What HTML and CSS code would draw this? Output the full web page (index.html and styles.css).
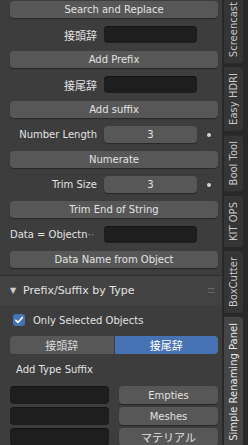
FILE: index.html
```html
<!DOCTYPE html>
<html lang="en">
<head>
  <meta charset="UTF-8" />
  <title>Simple Renaming Panel</title>
  <link rel="stylesheet" href="styles.css">
</head>
<body>
  <div class="region">
    <div class="main">
      <div class="panel-body">
        <button class="btn">Search and Replace</button>
        <div class="prop-row">
          <span class="label cjk">接頭辞</span>
          <span class="field text"></span>
        </div>
        <button class="btn">Add Prefix</button>
        <div class="prop-row">
          <span class="label cjk">接尾辞</span>
          <span class="field text"></span>
        </div>
        <button class="btn">Add suffix</button>
        <div class="prop-row">
          <span class="label">Number Length</span>
          <span class="field num">3</span>
          <span class="dot"></span>
        </div>
        <button class="btn">Numerate</button>
        <div class="prop-row">
          <span class="label">Trim Size</span>
          <span class="field num">3</span>
          <span class="dot"></span>
        </div>
        <button class="btn">Trim End of String</button>
        <div class="prop-row">
          <span class="label left">Data = Objectn<span class="dim">··</span></span>
          <span class="field text"></span>
        </div>
        <button class="btn">Data Name from Object</button>
      </div>

      <div class="subpanel">
        <div class="sub-header">
          <span class="arrow">▼</span>
          <span class="sub-title">Prefix/Suffix by Type</span>
          <span class="grip">::::</span>
        </div>
        <div class="sub-body">
          <label class="check-row">
            <span class="checkbox">
              <svg width="10" height="10" viewBox="0 0 10 10"><path d="M1.8 5.2 L4 7.4 L8.3 2.4" fill="none" stroke="#fff" stroke-width="1.6" stroke-linecap="round" stroke-linejoin="round"/></svg>
            </span>
            Only Selected Objects
          </label>
          <div class="toggle">
            <span class="toggle-item cjk">接頭辞</span>
            <span class="toggle-item active cjk">接尾辞</span>
          </div>
          <div class="caption">Add Type Suffix</div>
          <div class="type-rows">
            <div class="type-row">
              <span class="field text wide"></span>
              <button class="btn small">Empties</button>
            </div>
            <div class="type-row">
              <span class="field text wide"></span>
              <button class="btn small">Meshes</button>
            </div>
            <div class="type-row">
              <span class="field text wide"></span>
              <button class="btn small cjk">マテリアル</button>
            </div>
          </div>
        </div>
      </div>
    </div>

    <div class="tabs">
      <div class="tab first">Screencast</div>
      <div class="tab">Easy HDRI</div>
      <div class="tab">Bool Tool</div>
      <div class="tab">KIT OPS</div>
      <div class="tab">BoxCutter</div>
      <div class="tab active">Simple Renaming Panel</div>
    </div>
  </div>
</body>
</html>
```

FILE: styles.css
```css
* {
  margin: 0;
  padding: 0;
  box-sizing: border-box;
}

html, body {
  width: 248px;
  height: 445px;
  overflow: hidden;
  background: #2b2b2b;
  font-family: 'DejaVu Sans', 'Noto Sans CJK JP', sans-serif;
  font-size: 10px;
  color: #e2e2e2;
}

.cjk {
  font-family: 'Noto Sans CJK JP', 'DejaVu Sans', sans-serif;
  font-size: 11px;
}

.region {
  display: flex;
  height: 445px;
}

.main {
  width: 222px;
  background: #3d3d3d;
  display: flex;
  flex-direction: column;
}

.panel-body {
  display: flex;
  flex-direction: column;
  gap: 8px;
  padding: 1px 4px 0 10px;
}

.btn {
  height: 17px;
  border: none;
  border-radius: 4px;
  background: #575757;
  color: #e2e2e2;
  font-family: 'DejaVu Sans', sans-serif;
  font-size: 10px;
  box-shadow: 0 1px 1px rgba(0, 0, 0, 0.35);
}

.btn.cjk {
  font-family: 'Noto Sans CJK JP', sans-serif;
  font-size: 11px;
}

.prop-row {
  display: flex;
  align-items: center;
  height: 17px;
}

.label {
  width: 94px;
  padding-right: 7px;
  text-align: right;
  white-space: nowrap;
}

.label.left {
  text-align: left;
  padding-right: 0;
}

.dim {
  color: #9a9a9a;
}

.field {
  width: 93px;
  height: 17px;
  border-radius: 4px;
  display: flex;
  align-items: center;
  justify-content: center;
}

.field.text {
  background: #1e1e1e;
  box-shadow: inset 0 1px 1px rgba(0, 0, 0, 0.4);
}

.field.num {
  background: #575757;
  box-shadow: 0 1px 1px rgba(0, 0, 0, 0.35);
}

.dot {
  width: 4px;
  height: 4px;
  border-radius: 50%;
  background: #d0d0d0;
  margin-left: 10px;
}

.subpanel {
  margin-top: 7px;
  border-top: 1px solid #2d2d2d;
}

.sub-header {
  height: 29px;
  background: #424242;
  display: flex;
  align-items: center;
  padding: 0 8px 0 10px;
}

.arrow {
  font-size: 8px;
  color: #cfcfcf;
  width: 13px;
}

.sub-title {
  font-size: 11px;
  flex: 1;
}

.grip {
  color: #8a8a8a;
  font-size: 8px;
  letter-spacing: -1px;
}

.sub-body {
  padding: 9px 4px 0 10px;
  display: flex;
  flex-direction: column;
}

.check-row {
  display: flex;
  align-items: center;
  gap: 8px;
  height: 12px;
  padding-left: 3px;
}

.checkbox {
  width: 12px;
  height: 12px;
  border-radius: 3px;
  background: #4772b3;
  display: flex;
  align-items: center;
  justify-content: center;
}

.toggle {
  display: flex;
  margin-top: 10px;
  height: 18px;
}

.toggle-item {
  flex: 1;
  display: flex;
  align-items: center;
  justify-content: center;
  background: #575757;
  color: #d8d8d8;
}

.toggle-item:first-child {
  border-radius: 4px 0 0 4px;
  margin-right: 1px;
}

.toggle-item.active {
  background: #4772b3;
  color: #fff;
  border-radius: 0 4px 4px 0;
}

.caption {
  padding-left: 6px;
  margin-top: 9px;
  height: 14px;
  line-height: 14px;
}

.type-rows {
  display: flex;
  flex-direction: column;
  gap: 3px;
  margin-top: 9px;
}

.type-row {
  display: flex;
  gap: 10px;
  height: 18px;
}

.field.wide {
  width: 99px;
  height: 18px;
}

.btn.small {
  flex: 1;
  height: 18px;
}

.tabs {
  width: 26px;
  padding-left: 2px;
  display: flex;
  flex-direction: column;
  gap: 4px;
  background: #282828;
}

.tab {
  width: 19px;
  padding: 6px 0;
  writing-mode: vertical-rl;
  transform: rotate(180deg);
  background: #353535;
  color: #c8c8c8;
  border-radius: 4px 0 0 4px;
  line-height: 19px;
  text-align: center;
  white-space: nowrap;
}

.tab.first {
  margin-top: -4px;
}

.tab.active {
  background: #454545;
  color: #e8e8e8;
}
```
